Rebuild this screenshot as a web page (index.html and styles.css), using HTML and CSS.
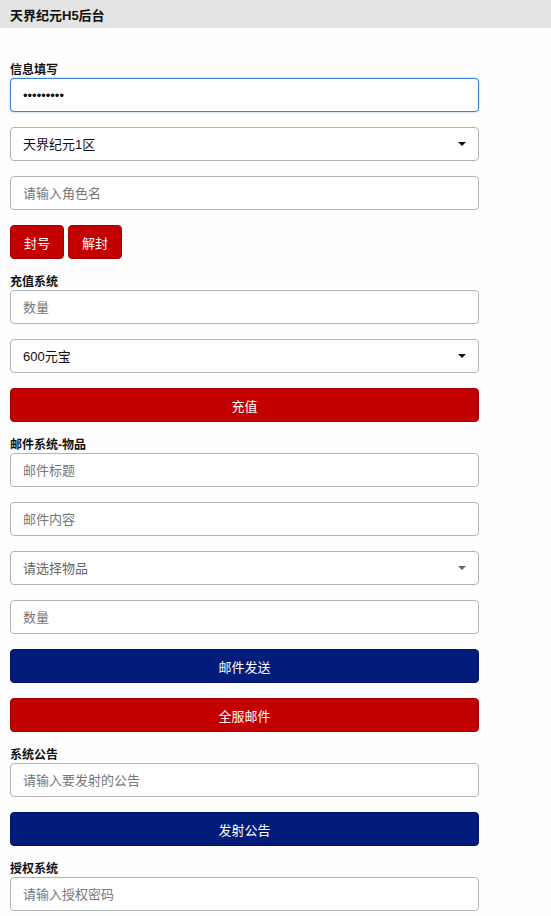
FILE: index.html
```html
<!DOCTYPE html>
<html lang="zh-CN">
<head>
  <meta charset="UTF-8" />
  <title>天界纪元H5后台</title>
  <link rel="stylesheet" href="styles.css">
</head>
<body>
  <header class="topbar">
    <h1>天界纪元H5后台</h1>
  </header>

  <div class="container">
    <label class="section">信息填写</label>
    <input class="field focused" type="password" value="123456789">
    <div class="select-wrap">
      <select class="field">
        <option>天界纪元1区</option>
        <option>天界纪元2区</option>
      </select>
      <span class="arrow"></span>
    </div>
    <input class="field" type="text" placeholder="请输入角色名">
    <div class="btn-row">
      <button class="btn red small">封号</button>
      <button class="btn red small">解封</button>
    </div>

    <label class="section">充值系统</label>
    <input class="field" type="text" placeholder="数量">
    <div class="select-wrap">
      <select class="field">
        <option>600元宝</option>
        <option>1200元宝</option>
      </select>
      <span class="arrow"></span>
    </div>
    <button class="btn red block">充值</button>

    <label class="section">邮件系统-物品</label>
    <input class="field" type="text" placeholder="邮件标题">
    <input class="field" type="text" placeholder="邮件内容">
    <div class="select-wrap">
      <select class="field muted">
        <option>请选择物品</option>
      </select>
      <span class="arrow grey"></span>
    </div>
    <input class="field" type="text" placeholder="数量">
    <button class="btn blue block">邮件发送</button>
    <button class="btn red block">全服邮件</button>

    <label class="section">系统公告</label>
    <input class="field" type="text" placeholder="请输入要发射的公告">
    <button class="btn blue block">发射公告</button>

    <label class="section">授权系统</label>
    <input class="field" type="text" placeholder="请输入授权密码">
  </div>
</body>
</html>
```

FILE: styles.css
```css
body {
  margin: 0;
  background: #fefefe;
  font-family: "Liberation Sans", "Noto Sans CJK SC", sans-serif;
  font-size: 13px;
  color: #111;
}

.topbar {
  height: 28px;
  background: #e4e4e4;
  display: flex;
  align-items: center;
  padding: 0 10px;
}

.topbar h1 {
  margin: 0;
  font-size: 13px;
  font-weight: bold;
  color: #111;
}

.container {
  width: 469px;
  margin-left: 10px;
  padding-top: 34px;
}

.section {
  display: block;
  font-size: 12px;
  font-weight: bold;
  line-height: 16px;
  color: #111;
}

.field {
  display: block;
  box-sizing: border-box;
  width: 100%;
  height: 34px;
  margin: 0 0 15px 0;
  padding: 0 12px;
  border: 1px solid #b4b4b4;
  border-radius: 4px;
  background: #fff;
  font-family: inherit;
  font-size: 13px;
  color: #111;
  outline: none;
}

.field::placeholder {
  color: #777;
}

.field.focused {
  border: 1px solid #3c82d4;
  box-shadow: 0 0 2px rgba(60, 130, 212, 0.6);
}

select.field {
  appearance: none;
  -webkit-appearance: none;
}

select.muted {
  color: #666;
}

.select-wrap {
  position: relative;
}

.arrow {
  position: absolute;
  right: 13px;
  top: 15px;
  width: 0;
  height: 0;
  border-left: 4px solid transparent;
  border-right: 4px solid transparent;
  border-top: 4px solid #111;
}

.arrow.grey {
  border-top-color: #666;
}

.btn-row {
  display: flex;
  gap: 4px;
  margin-bottom: 15px;
}

.btn {
  height: 34px;
  border: 1px solid #a40000;
  border-radius: 4px;
  color: #fff;
  font-family: inherit;
  font-size: 13px;
  cursor: pointer;
}

.btn.small {
  padding: 0 13px;
}

.btn.block {
  display: block;
  width: 100%;
  margin-bottom: 15px;
}

.red {
  background: #c30000;
}

.blue {
  background: #021c7c;
  border-color: #01146a;
}
```
